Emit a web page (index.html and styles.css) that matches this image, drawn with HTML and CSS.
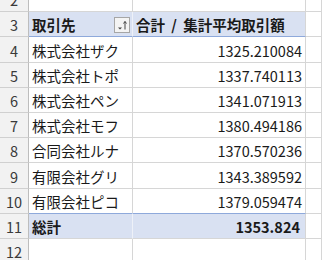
FILE: index.html
```html
<!DOCTYPE html>
<html lang="ja">
<head>
<meta charset="utf-8">
<link rel="stylesheet" href="styles.css">
</head>
<body>
<div class="sheet">
  <div class="rh">2</div><div class="c"></div><div class="c"></div><div class="c"></div>

  <div class="rh">3</div>
  <div class="c hd"><span>取引先</span>
    <span class="fbtn"><svg width="14" height="14" viewBox="0 0 14 14"><path d="M3 9.5h4l-2 2z" fill="#444"/><path d="M10 3.5v8" stroke="#444" stroke-width="1"/><path d="M8.5 5.5L10 3.5l1.5 2" fill="none" stroke="#444" stroke-width="1"/></svg></span>
  </div>
  <div class="c hd hd2">合計 / 集計平均取引額</div>
  <div class="c"></div>

  <div class="rh">4</div><div class="c">株式会社ザク</div><div class="c num">1325.210084</div><div class="c"></div>
  <div class="rh">5</div><div class="c">株式会社トポ</div><div class="c num">1337.740113</div><div class="c"></div>
  <div class="rh">6</div><div class="c">株式会社ペン</div><div class="c num">1341.071913</div><div class="c"></div>
  <div class="rh">7</div><div class="c">株式会社モフ</div><div class="c num">1380.494186</div><div class="c"></div>
  <div class="rh">8</div><div class="c">合同会社ルナ</div><div class="c num">1370.570236</div><div class="c"></div>
  <div class="rh">9</div><div class="c">有限会社グリ</div><div class="c num">1343.389592</div><div class="c"></div>
  <div class="rh">10</div><div class="c">有限会社ピコ</div><div class="c num">1379.059474</div><div class="c"></div>

  <div class="rh">11</div><div class="c tot">総計</div><div class="c tot num">1353.824</div><div class="c"></div>
  <div class="rh">12</div><div class="c"></div><div class="c"></div><div class="c"></div>
</div>
</body>
</html>
```
FILE: styles.css
```css
html, body {
  margin: 0;
  padding: 0;
  background: #fff;
  overflow: hidden;
}
.sheet {
  display: grid;
  grid-template-columns: 29px 104px 173px 1fr;
  grid-auto-rows: 25.2px;
  margin-top: -12.9px;
  font-family: "Noto Sans CJK JP", "Noto Sans", sans-serif;
  font-size: 14.5px;
  color: #1a1a1a;
}
.rh, .c {
  box-sizing: border-box;
  border-right: 1px solid #d6d6d6;
  border-bottom: 1px solid #d6d6d6;
  display: flex;
  align-items: center;
  white-space: nowrap;
  overflow: hidden;
}
.rh {
  background: #f2f2f2;
  border-right-color: #bdbdbd;
  border-bottom-color: #d0d0d0;
  justify-content: center;
  color: #3a3a3a;
  font-size: 14.5px;
  padding-top: 1px;
}
.c {
  padding: 1px 3px 0 3px;
}
.hd {
  background: #d9e1f2;
  font-weight: bold;
  border-bottom-color: #8ea9db;
  border-right-color: #eef1f8;
}
.hd2 {
  border-right-color: #d6d6d6;
  word-spacing: 3px;
}
.num { justify-content: flex-end; }
.tot {
  background: #d9e1f2;
  font-weight: bold;
  border-top: 1px solid #8ea9db;
  margin-top: -1px;
  border-right-color: #eef1f8;
}
.tot.num { border-right-color: #d6d6d6; padding-right: 5px; }
.fbtn {
  margin-left: auto;
  margin-right: -1px;
  width: 14px;
  height: 14px;
  border: 1px solid #a6a6a6;
  background: #f4f4f4;
  display: flex;
}
```
